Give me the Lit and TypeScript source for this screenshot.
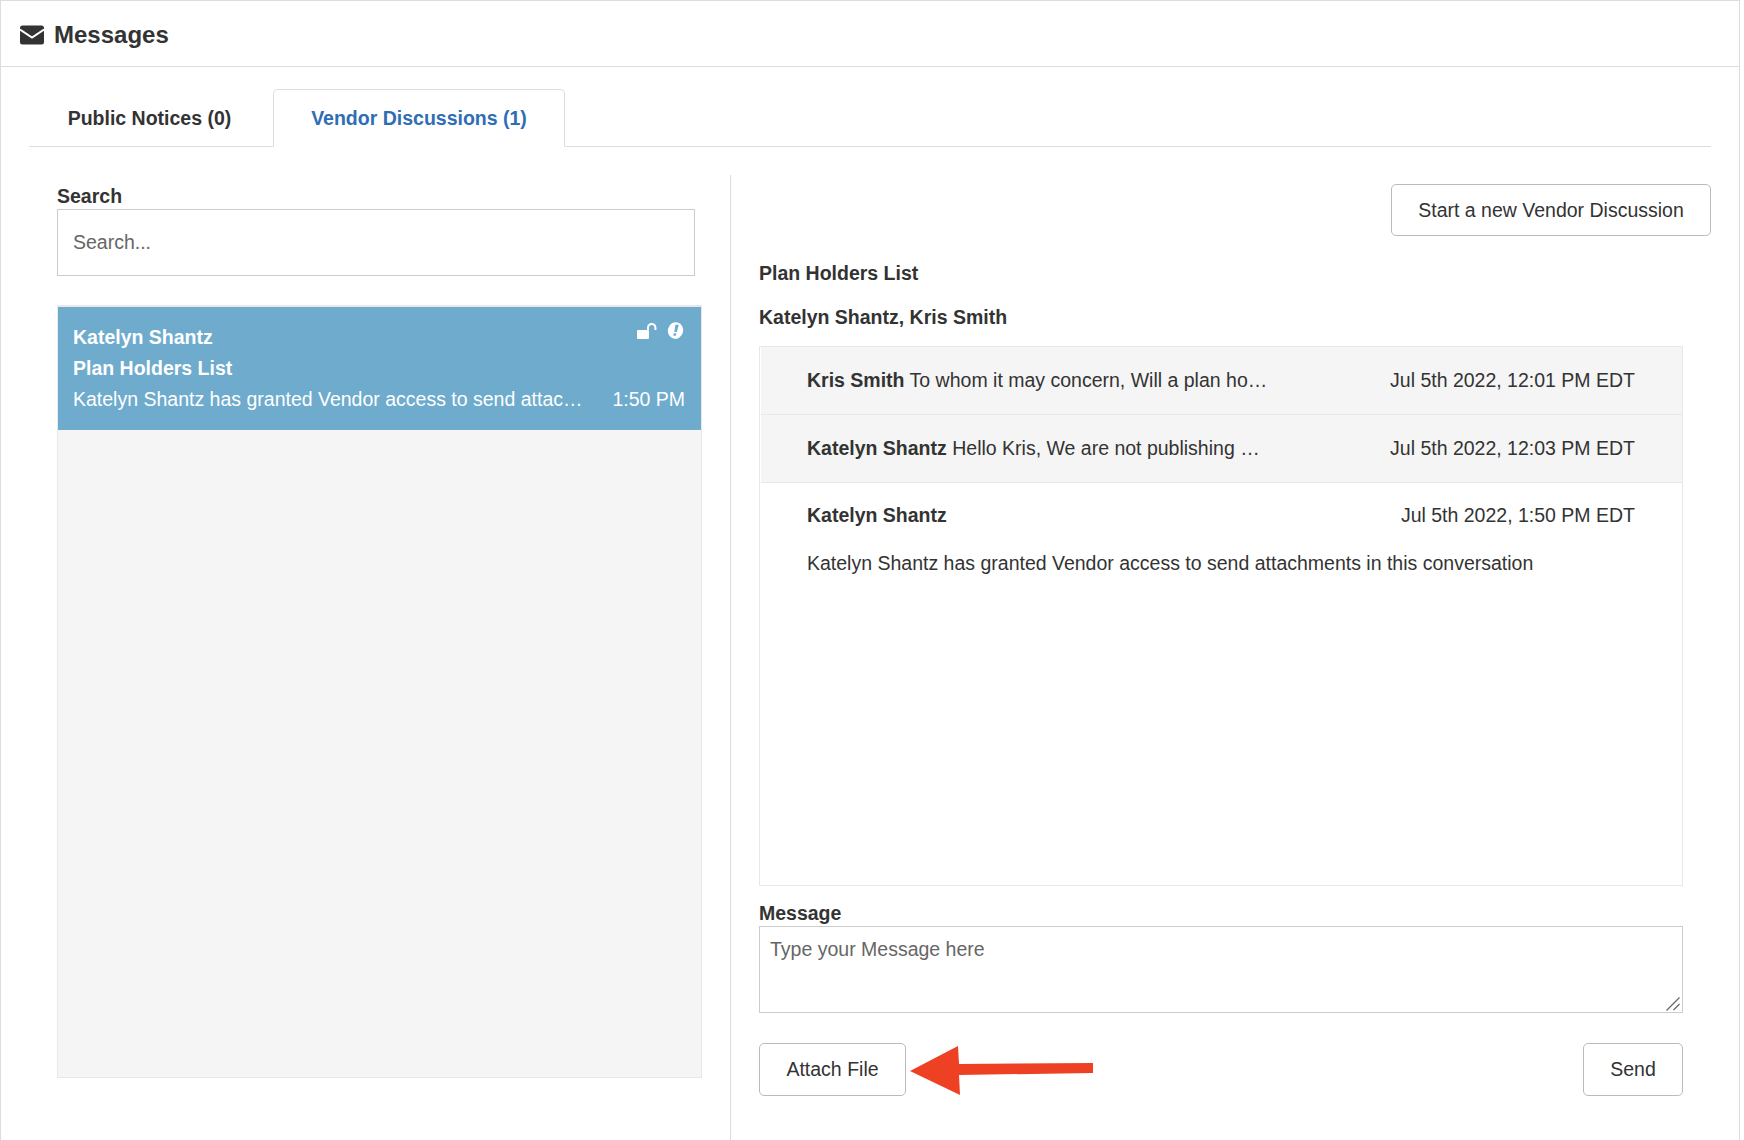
import { LitElement, html, css } from 'lit';
import { customElement } from 'lit/decorators.js';

@customElement('app-root')
export class AppRoot extends LitElement {
    static styles = css`
        :host {
            display: block;
            height: 1140px;
            overflow: hidden;
            background: #fff;
            color: #333;
            font-family: "Liberation Sans", Arial, sans-serif;
            font-size: 19.5px;
            line-height: 1.4;
        }

        * {
            box-sizing: border-box;
        }

        .frame {
            position: relative;
            width: 1740px;
            height: 1140px;
            border: 1px solid #ddd;
            border-bottom: none;
        }

        .header {
            display: flex;
            align-items: center;
            gap: 10px;
            height: 66px;
            padding: 3px 0 0 19px;
            border-bottom: 1px solid #ddd;
            font-size: 24px;
            font-weight: bold;
        }

        .tabs {
            display: flex;
            height: 58px;
            margin: 22px 28px 0 28px;
            border-bottom: 1px solid #ddd;
        }

        .tab {
            display: flex;
            align-items: center;
            justify-content: center;
            height: 58px;
            padding-top: 2px;
            font-size: 19.5px;
            font-weight: bold;
        }

        .tab.plain {
            width: 244px;
            padding-right: 3px;
        }

        .tab.active {
            width: 292px;
            color: #2f6db5;
            background: #fff;
            border: 1px solid #ddd;
            border-bottom-color: #fff;
            border-radius: 5px 5px 0 0;
        }

        .columns {
            display: flex;
            height: 987px;
            margin-top: 28px;
            padding-left: 56px;
        }

        .left {
            width: 674px;
            padding-right: 29px;
            border-right: 1px solid #ddd;
        }

        .right {
            width: 978px;
            padding-left: 28px;
        }

        .label {
            display: block;
            height: 25px;
            margin-top: 8px;
            font-size: 19.5px;
            font-weight: bold;
            line-height: 25px;
        }

        .search-label {
            margin-top: 9px;
        }

        .search {
            display: block;
            width: 638px;
            height: 67px;
            padding: 0 15px;
            border: 1px solid #ccc;
            border-radius: 0;
            outline: none;
            color: #333;
            font: 19.5px "Liberation Sans", Arial, sans-serif;
        }

        .search::placeholder,
        .message::placeholder {
            color: #666;
            opacity: 1;
        }

        .list {
            width: 645px;
            height: 773px;
            margin-top: 29px;
            background: #f5f5f5;
            border: 1px solid #e8e8e8;
            border-top-width: 2px;
        }

        .conversation {
            position: relative;
            height: 123px;
            padding: 15px 16px 0 15px;
            background: #6eabcd;
            color: #fff;
            font-size: 19.5px;
            line-height: 31px;
        }

        .conversation .name {
            font-weight: bold;
        }

        .conversation .preview {
            display: flex;
            justify-content: space-between;
        }

        .status {
            position: absolute;
            top: 15px;
            right: 17px;
            display: flex;
            align-items: center;
            gap: 10px;
        }

        .toolbar {
            display: flex;
            justify-content: flex-end;
            width: 952px;
            margin-top: 9px;
        }

        button {
            height: 52px;
            padding: 0;
            background: #fff;
            border: 1px solid #bbb;
            border-radius: 5px;
            color: #333;
            font: 19.5px "Liberation Sans", Arial, sans-serif;
        }

        .start {
            width: 320px;
        }

        .title {
            height: 44px;
            font-size: 19.5px;
            font-weight: bold;
            line-height: 28px;
        }

        .plan {
            margin-top: 23px;
        }

        .thread {
            width: 924px;
            height: 540px;
            margin-top: -1px;
            border: 1px solid #e8e8e8;
        }

        .row {
            display: flex;
            justify-content: space-between;
            align-items: center;
            height: 68px;
            padding: 0 47px 0 46px;
            background: #f5f5f5;
            border-bottom: 1px solid #e8e8e8;
            font-size: 19.5px;
            margin-left: 1px;
        }

        .row b,
        .open b {
            font-weight: bold;
        }

        .open {
            padding: 19px 47px 0 46px;
            font-size: 19.5px;
            margin-left: 1px;
        }

        .open .top {
            display: flex;
            justify-content: space-between;
        }

        .open p {
            margin: 21px 0 0;
        }

        .message-label {
            margin-top: 15px;
        }

        .compose {
            position: relative;
            width: 924px;
            height: 87px;
        }

        .message {
            display: block;
            width: 100%;
            height: 100%;
            padding: 11px 10px;
            border: 1px solid #ccc;
            border-radius: 0;
            outline: none;
            resize: none;
            color: #333;
            font: 19.5px "Liberation Sans", Arial, sans-serif;
        }

        .grip {
            position: absolute;
            right: 3px;
            bottom: 2px;
            pointer-events: none;
        }

        .actions {
            display: flex;
            justify-content: space-between;
            width: 924px;
            margin-top: 30px;
        }

        .attach {
            width: 147px;
            height: 53px;
        }

        .send {
            width: 100px;
            height: 53px;
        }

        .arrow {
            position: absolute;
            left: 905px;
            top: 1041px;
        }
    `;

    render() {
        return html`
            <div class="frame">
                <div class="header">
                    <svg width="24" height="20" viewBox="0 0 24 20">
                        <rect y="0.5" width="24" height="19" rx="2.5" fill="#333"></rect>
                        <path d="M0 4.5 L12 12.5 L24 4.5" fill="none" stroke="#fff" stroke-width="2"></path>
                    </svg>
                    <span>Messages</span>
                </div>
                <div class="tabs">
                    <div class="tab plain">Public Notices (0)</div>
                    <div class="tab active">Vendor Discussions (1)</div>
                </div>
                <div class="columns">
                    <div class="left">
                        <label class="label search-label">Search</label>
                        <input class="search" placeholder="Search..." />
                        <div class="list">
                            <div class="conversation">
                                <div class="status">
                                    <svg width="20" height="16" viewBox="0 0 20 16">
                                        <rect x="0" y="7" width="12" height="9" rx="1" fill="#fff"></rect>
                                        <path d="M11 7 V4.6 A3.6 3.6 0 0 1 18.4 4.6 V7" fill="none" stroke="#fff" stroke-width="2"></path>
                                    </svg>
                                    <svg width="17" height="17" viewBox="0 0 17 17">
                                        <ellipse cx="8.5" cy="8.5" rx="7.6" ry="8.4" transform="rotate(15 8.5 8.5)" fill="#fff"></ellipse>
                                        <path d="M8.4 2.8 H11.8 L9.8 10 H7.3 Z M6.9 11.2 H9.4 L8.8 13.8 H6.3 Z" fill="#6eabcd"></path>
                                    </svg>
                                </div>
                                <div class="name">Katelyn Shantz</div>
                                <div class="name">Plan Holders List</div>
                                <div class="preview">
                                    <span>Katelyn Shantz has granted Vendor access to send attac…</span>
                                    <span>1:50 PM</span>
                                </div>
                            </div>
                        </div>
                    </div>
                    <div class="right">
                        <div class="toolbar">
                            <button class="start">Start a new Vendor Discussion</button>
                        </div>
                        <div class="title plan">Plan Holders List</div>
                        <div class="title">Katelyn Shantz, Kris Smith</div>
                        <div class="thread">
                            <div class="row">
                                <span><b>Kris Smith</b> To whom it may concern, Will a plan ho…</span>
                                <span>Jul 5th 2022, 12:01 PM EDT</span>
                            </div>
                            <div class="row">
                                <span><b>Katelyn Shantz</b> Hello Kris, We are not publishing …</span>
                                <span>Jul 5th 2022, 12:03 PM EDT</span>
                            </div>
                            <div class="open">
                                <div class="top">
                                    <b>Katelyn Shantz</b>
                                    <span>Jul 5th 2022, 1:50 PM EDT</span>
                                </div>
                                <p>Katelyn Shantz has granted Vendor access to send attachments in this conversation</p>
                            </div>
                        </div>
                        <label class="label message-label">Message</label>
                        <div class="compose">
                            <textarea class="message" placeholder="Type your Message here"></textarea>
                            <svg class="grip" width="14" height="14" viewBox="0 0 14 14">
                                <path d="M0.5 13.5 L13.5 0.5 M7.5 13 L13.5 7" fill="none" stroke="#666" stroke-width="1.2"></path>
                            </svg>
                        </div>
                        <div class="actions">
                            <button class="attach">Attach File</button>
                            <button class="send">Send</button>
                        </div>
                    </div>
                </div>
                <svg class="arrow" width="190" height="56" viewBox="0 0 190 56">
                    <path d="M4 29 L52 4 L53 22 L187 21 L187 31 L53 33 L54 53 Z" fill="#ee4123"></path>
                </svg>
            </div>
        `;
    }
}
